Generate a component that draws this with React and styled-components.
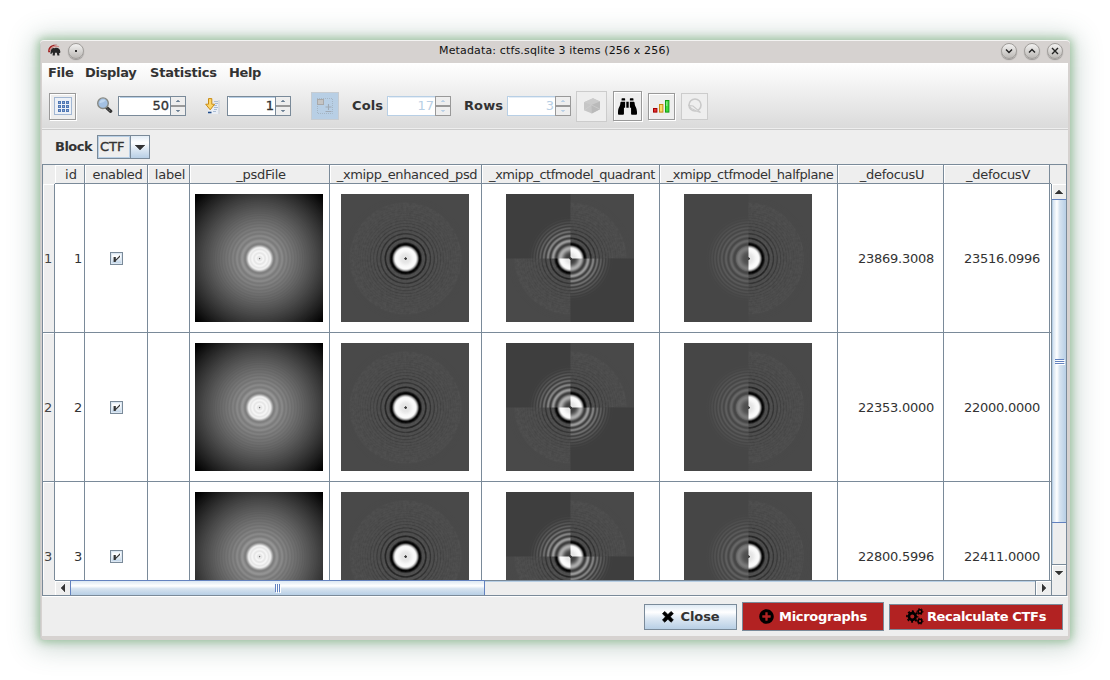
import React from "react";
import styled, { createGlobalStyle, css } from "styled-components";
import { FaBinoculars, FaPlusCircle } from "react-icons/fa";

const line = "#7a8a99";
const ink = "#333333";

const Global = createGlobalStyle`
  * { box-sizing: border-box; }
  body { margin: 0; background: #fff; overflow: hidden; }
  svg { display: block; flex: none; }
`;

const Desktop = styled.div`
  width: 1110px;
  height: 680px;
  padding: 40px;
  font: 13px/16px "DejaVu Sans", sans-serif;
  color: ${ink};
`;

const Window = styled.div`
  width: 1030px;
  height: 600px;
  padding: 0 2px 4px;
  display: flex;
  flex-direction: column;
  background: #d6d2d0;
  border-radius: 4px;
  box-shadow: inset 0 1px 0 #f4f3f2, inset 1px 0 0 #c9cbc8, 0 0 9px 2px rgba(60, 145, 60, 0.4),
    0 2px 26px 7px rgba(60, 105, 90, 0.26);
`;

const TitleBar = styled.div`
  height: 23px;
  flex: none;
  display: flex;
  align-items: center;
  padding: 0 5px 2px 6px;
`;

const Title = styled.div`
  flex: 1;
  text-align: center;
  font-size: 11px;
  letter-spacing: 0.15px;
  color: #111;
  padding: 1px 0 0 24px;
`;

const TitleButtons = styled.div`
  display: flex;
  align-items: center;
  gap: 7px;
`;

const RoundButton = styled.div`
  width: 16px;
  height: 16px;
  border-radius: 50%;
  background: linear-gradient(#f2f1f0, #bcb9b6);
  border: 1px solid #a19e9b;
  box-shadow: 0 1px 1px rgba(0, 0, 0, 0.3);
  display: flex;
  align-items: center;
  justify-content: center;
`;

const Chrome = styled.div`
  height: 67px;
  flex: none;
  background: linear-gradient(#ffffff, #dadada);
  border-bottom: 1px solid #cccccc;
  box-shadow: inset 0 -1px 0 #eeeeee;
`;

const MenuBar = styled.div`
  display: flex;
  height: 20px;
  align-items: center;
  padding-left: 6px;
`;

const MenuItem = styled.div`
  width: ${(p) => p.$w}px;
  font-weight: bold;
  letter-spacing: ${(p) => p.$track || 0}px;
`;

const Toolbar = styled.div`
  display: flex;
  height: 46px;
  align-items: center;
  padding-left: 7px;
`;

const Gap = styled.div`
  width: ${(p) => p.$w}px;
  flex: none;
`;

const ToolButton = styled.div`
  width: ${(p) => p.$w}px;
  height: ${(p) => p.$h}px;
  flex: none;
  display: flex;
  align-items: center;
  justify-content: center;
  border: 1px solid #999;
  background: #eeeeee;
  box-shadow: inset 1px 1px 0 #fff, 1px 1px 0 #fff;
  color: #000;
  ${(p) =>
    p.$disabled &&
    css`
      border-color: #cccccc;
      box-shadow: none;
    `}
  ${(p) =>
    p.$selected &&
    css`
      border-color: #c7ccd1;
      background: #b8cfe5;
      box-shadow: none;
    `}
`;

const ToolLabel = styled.div`
  width: ${(p) => p.$w}px;
  font-weight: bold;
  letter-spacing: 0.1px;
`;

const SpinnerBox = styled.div`
  width: ${(p) => p.$w}px;
  height: 20px;
  flex: none;
  display: flex;
  color: ${(p) => (p.$disabled ? "#b8cfe5" : ink)};
`;

const SpinnerField = styled.div`
  flex: 1;
  background: #fff;
  border: 1px solid ${(p) => (p.$disabled ? "#b8cfe5" : line)};
  border-right: 0;
  text-align: right;
  line-height: 18px;
  padding-right: 1px;
  box-shadow: inset 1px 0 0 #fff, inset 0 1px 0 ${(p) => (p.$disabled ? "#e4edf6" : "#b8cfe5")};
  -webkit-text-stroke: ${(p) => (p.$disabled ? 0 : 0.35)}px;
`;

const SpinnerArrows = styled.div`
  width: 16px;
  display: flex;
  flex-direction: column;
  border: 1px solid ${(p) => (p.$disabled ? "#999" : line)};
  background: #eee;
  color: ${(p) => (p.$disabled ? "#b8cfe5" : "#6b7f92")};
`;

const SpinnerArrow = styled.div`
  flex: 1;
  display: flex;
  align-items: center;
  justify-content: center;
  & + & {
    border-top: 2px solid ${(p) => (p.$disabled ? "#999" : line)};
  }
`;

const BlockRow = styled.div`
  height: 34px;
  flex: none;
  display: flex;
  align-items: center;
  padding-left: 13px;
  background: #eee;
  font-weight: bold;
`;

const BlockLabel = styled.div`
  width: 42px;
  letter-spacing: -0.5px;
  padding-bottom: 1px;
`;

const Combo = styled.div`
  width: 53px;
  height: 24px;
  display: flex;
  border: 1px solid ${line};
  font-weight: normal;
  -webkit-text-stroke: 0.35px;
`;

const ComboValue = styled.div`
  width: 32px;
  border: 1px solid #b8cfe5;
  line-height: 20px;
  padding-left: 1px;
`;

const ComboArrow = styled.div`
  flex: 1;
  border-left: 1px solid ${line};
  display: flex;
  align-items: center;
  justify-content: center;
  padding-top: 1px;
  background: linear-gradient(#e3edf6 0%, #fff 30%, #dde8f3 60%, #b8cfe5 100%);
`;

const TablePanel = styled.div`
  height: 432px;
  width: 1025px;
  flex: none;
  display: grid;
  grid-template-columns: 12px 996px 16px;
  grid-template-rows: 19px 396px 15px;
  border: 1px solid ${line};
  border-right: 0;
  background: #eee;
`;

const HeadRow = styled.div`
  display: flex;
  border-bottom: 1px solid ${line};
`;

const HeadCell = styled.div`
  width: ${(p) => p.$w}px;
  flex: none;
  border-right: 1px solid ${line};
  box-shadow: inset 1px 1px 0 #fff;
  text-align: center;
  line-height: 20px;
  height: 18px;
  letter-spacing: ${(p) => p.$track ?? -0.36}px;
  white-space: nowrap;
  padding-left: 3px;
`;

const CornerCell = styled.div`
  border-right: 1px solid ${(p) => (p.$edge ? line : "transparent")};
  border-left: 1px solid ${(p) => (p.$start ? line : "transparent")};
`;

const RowHeads = styled.div`
  overflow: hidden;
  border-right: 1px solid ${line};
`;

const RowHead = styled.div`
  height: 149px;
  padding: 1px 0 0 1px;
  display: flex;
  align-items: center;
  border-bottom: 1px solid ${line};
  box-shadow: inset 1px 1px 0 #fff;
  color: #444;
`;

const Body = styled.div`
  overflow: hidden;
  background: #fff;
`;

const Row = styled.div`
  display: flex;
  height: 149px;
  border-bottom: 1px solid ${line};
`;

const Cell = styled.div`
  width: ${(p) => p.$w}px;
  flex: none;
  border-right: 1px solid ${line};
  display: flex;
  align-items: center;
  justify-content: center;
  padding-right: 1px;
`;

const NumberCell = styled(Cell)`
  justify-content: flex-end;
  padding: 2px ${(p) => p.$pad}px 0 0;
  letter-spacing: -0.26px;
`;

const Check = styled.div`
  width: 13px;
  height: 13px;
  margin-left: 1px;
  border: 1px solid ${line};
  background: linear-gradient(#e3edf6, #fff 30%, #b8cfe5);
  box-shadow: inset 0 0 0 1px #dce7f2;
`;

const VScroll = styled.div`
  display: flex;
  flex-direction: column;
  border-left: 1px solid ${line};
  border-right: 1px solid ${line};
`;

const HScroll = styled.div`
  display: flex;
  border-top: 1px solid ${line};
`;

const ScrollButton = styled.div`
  width: ${(p) => p.$w}px;
  height: ${(p) => p.$h}px;
  flex: none;
  display: flex;
  align-items: center;
  justify-content: center;
  box-shadow: inset 1px 1px 0 #fff;
  border-${(p) => p.$side}: 1px solid ${line};
`;

const Track = styled.div`
  flex: 1;
  box-shadow: inset ${(p) => (p.$vertical ? "1px 0" : "0 1px")} 0 #b8cfe5;
`;

const VThumb = styled.div`
  height: 324px;
  flex: none;
  border: solid #6382bf;
  border-width: 1px 0;
  box-shadow: inset 1px 0 0 #b8cfe5;
  background: linear-gradient(90deg, #c8daec, #fff 35%, #d6e3f0 55%, #b8cfe5);
  display: flex;
  align-items: center;
  justify-content: center;
  padding: 2px 0 0 2px;
`;

const HThumb = styled.div`
  width: 415px;
  flex: none;
  margin-top: -1px;
  border: solid #6382bf;
  border-width: 1px 1px 0;
  background: linear-gradient(#dce8f3, #fff 35%, #d6e3f0 55%, #b8cfe5);
  display: flex;
  align-items: center;
  justify-content: center;
`;

const Footer = styled.div`
  flex: 1;
  background: #eee;
  border-top: 1px solid #fff;
  display: flex;
  align-items: center;
  justify-content: flex-end;
  gap: 5px;
  padding: 0 5px 0 0;
`;

const ActionButton = styled.div`
  width: ${(p) => p.$w}px;
  height: ${(p) => p.$h}px;
  display: flex;
  align-items: center;
  justify-content: center;
  gap: ${(p) => p.$gap}px;
  border: 1px solid ${line};
  font-weight: bold;
  letter-spacing: ${(p) => p.$track || 0}px;
  color: ${(p) => (p.$danger ? "#fff" : ink)};
  background: ${(p) => (p.$danger ? "#b22222" : "linear-gradient(#dfeaf4, #fff 30%, #dde8f3 55%, #b8cfe5)")};
  svg { color: #000; }
`;

/* ---- power spectrum thumbnails ---- */

const C = 64.6;
const R = 92;
const PERIOD = 206;
const grey = (v) => {
  const n = Math.max(0, Math.min(255, Math.round(v)));
  return `rgb(${n},${n},${n})`;
};
const smooth = (a, b, x) => {
  const t = Math.max(0, Math.min(1, (x - a) / (b - a)));
  return t * t * (3 - 2 * t);
};
const wave = (r) => Math.cos((2 * Math.PI * r * r) / PERIOD);

const profiles = {
  psd: (r) => {
    const base = 158 - 1.1 * r - 0.0078 * r * r;
    const fade = Math.exp(-Math.max(0, r - 14) / 14);
    const outer = base - 15 * fade * wave(r);
    const inner = 238 + 8 * Math.cos(r * 1.7);
    return inner + (outer - inner) * smooth(10, 14.6, r);
  },
  enhanced: (r) => {
    const amp = 74 * Math.exp(-Math.max(0, r - 14.3) / 10);
    const first = Math.exp(-Math.pow((r - 14.5) / 2.4, 2));
    const w = Math.max(wave(r), first * 1.6 - 0.6);
    const outer = 73 - amp * (w > 0 ? w : w * 0.1);
    const inner = r < 1.3 ? 60 : 228 + 22 * smooth(3, 9, r);
    return inner + (outer - inner) * smooth(10, 13.8, r);
  },
  modelStrong: (r) => {
    const amp = 55 * Math.exp(-Math.pow(Math.max(0, r - 10) / 19, 2));
    return 62 + amp * (1 - wave(r)) * (1 - smooth(34, 44, r));
  },
  modelSoft: (r) => {
    const amp = 24 * Math.exp(-Math.pow(r / 29, 2));
    return 70 + (amp * (1 - wave(r)) + (r < 13 ? 8 : 0)) * (1 - smooth(34, 44, r));
  },
};

const Ramp = ({ name }) => (
  <radialGradient id={name} gradientUnits="userSpaceOnUse" cx={C} cy={C} r={R}>
    {Array.from({ length: 185 }, (_, i) => (
      <stop key={i} offset={(i * 0.5) / R} stopColor={grey(profiles[name](i * 0.5))} />
    ))}
  </radialGradient>
);

const DefsHolder = styled.svg`
  position: absolute;
`;

const SharedDefs = () => (
  <DefsHolder width="0" height="0">
    <defs>
      {Object.keys(profiles).map((n) => (
        <Ramp key={n} name={n} />
      ))}
      <filter id="grain" x="0" y="0" width="1" height="1">
        <feTurbulence type="fractalNoise" baseFrequency="0.35" numOctaves="2" seed="4" />
        <feColorMatrix values="0 0 0 0 1  0 0 0 0 1  0 0 0 0 1  0.5 0 0 0 -0.1" />
        <feComposite in2="SourceGraphic" operator="in" />
      </filter>
    </defs>
  </DefsHolder>
);

const TOP_RIGHT = "M64 64V8.5A56 56 0 0 1 120.5 64Z";
const BOTTOM_LEFT = "M64 64H8.5A56 56 0 0 0 64 120.5Z";
const RIGHT_HALF = "M64 8.5A56 56 0 0 1 64 120.5Z";

const Spectrum = ({ kind }) => (
  <svg width="128" height="128" viewBox="0 0 128 128">
    {kind === "psd" && (
      <>
        <rect width="128" height="128" fill="url(#psd)" />
        <circle cx={C} cy={C} r="0.8" fill="#777" />
      </>
    )}
    {kind === "enhanced" && (
      <>
        <rect width="128" height="128" fill="url(#enhanced)" />
        <circle cx={C} cy={C} r="56" filter="url(#grain)" opacity="0.14" />
      </>
    )}
    {kind === "quadrant" && (
      <>
        <rect width="128" height="128" fill="url(#enhanced)" />
        <path d={TOP_RIGHT} filter="url(#grain)" opacity="0.14" />
        <path d={BOTTOM_LEFT} filter="url(#grain)" opacity="0.14" />
        <path d="M0 0H64.5V64.5H0ZM64.5 64.5H128V128H64.5Z" fill="url(#modelStrong)" />
      </>
    )}
    {kind === "halfplane" && (
      <>
        <rect width="128" height="128" fill="url(#enhanced)" />
        <path d={RIGHT_HALF} filter="url(#grain)" opacity="0.14" />
        <rect width="64.5" height="128" fill="url(#modelSoft)" />
      </>
    )}
  </svg>
);

/* ---- small icons ---- */

const Triangle = ({ dir, w = 8, h = 4 }) => {
  const d = {
    up: `M0 ${h}L${w / 2} 0L${w} ${h}Z`,
    down: `M0 0H${w}L${w / 2} ${h}Z`,
    left: `M${w} 0V${h}L0 ${h / 2}Z`,
    right: `M0 0V${h}L${w} ${h / 2}Z`,
  }[dir];
  return (
    <svg width={w} height={h}>
      <path d={d} fill="currentColor" stroke="currentColor" strokeWidth="0.5" />
    </svg>
  );
};

const AppIcon = () => (
  <svg width="13" height="13" viewBox="0 0 13 13">
    <path d="M0.2 8.2C-0.2 3 3.5 0 9.5 1C5.5 1.2 2.6 3.2 2 8.2Z" fill="#a01c1c" />
    <path d="M1.8 7C2.6 3.4 6 1.8 11 2.6" stroke="#cf8f8b" strokeWidth="1.2" fill="none" />
    <path d="M3 6.2C3.6 4.2 5.2 3.6 6.6 4.2C9 3.2 12.2 4.4 12.4 8L12 9H11.2L11.4 11.4H9.4L8.8 8.8H7L6.8 11.4H4.6L4.9 8.6L3.8 8.9L3.3 10.2L2.3 9.6Z" fill="#262626" />
  </svg>
);

const GridIcon = () => (
  <svg width="18" height="18" viewBox="0 0 18 18" shapeRendering="crispEdges">
    <rect x="0.5" y="0.5" width="17" height="17" fill="#edf1f7" stroke="#a2b7d3" />
    {[4, 8, 12].map((y) =>
      [4, 8, 12].map((x) => (
        <g key={`${x}-${y}`}>
          <rect x={x} y={y} width="3" height="3" fill="#5078b4" />
          <rect x={x + 1} y={y + 1} width="1" height="1" fill="#8fa9d0" />
        </g>
      ))
    )}
  </svg>
);

const Magnifier = () => (
  <svg width="17" height="18" viewBox="0 0 17 18">
    <path d="M10.5 10.5L14.6 14.2" stroke="#333" strokeWidth="3.4" strokeLinecap="round" />
    <path d="M11.5 12L14 14" stroke="#888" strokeWidth="1" strokeDasharray="1 1" />
    <circle cx="7" cy="6.2" r="5.3" fill="#a3c0e2" stroke="#888a85" strokeWidth="1.4" />
    <path d="M3.4 6A3.7 3.7 0 0 1 9.8 3.6Q6.8 6.5 3.4 6Z" fill="#bfd6ef" />
  </svg>
);

const GotoIcon = () => (
  <svg width="16" height="17" viewBox="0 0 16 17">
    <path d="M3 5H14.5V16H3Z" fill="#e9eef5" />
    <path d="M14 2V16" stroke="#c5cbd3" />
    <path d="M9 3.5H13M10 5.5H13M9 7.5H12M9 9.5H13M9 11.5H12M8 13.5H11" stroke="#a9bcd4" />
    <path d="M3 14.5H6.5" stroke="#204a87" strokeWidth="1.6" />
    <path d="M3.5 0.6H6.8V6.2H9.6L5.2 11.8L0.7 6.2H3.5Z" fill="#fcd669" stroke="#c88a12" />
  </svg>
);

const SelectIcon = () => (
  <svg width="18" height="18" viewBox="0 0 18 18">
    <path d="M1 1.5H16.5V16.5H1.5V1" fill="none" stroke="#a5b6c5" strokeDasharray="1 1" />
    <rect x="1.5" y="2.5" width="6" height="5" fill="#c4c4c4" stroke="#a9a9a9" />
    <path d="M9.5 10H15.5M12.5 7V13M9.5 14.5H15.5" stroke="#9faab5" strokeWidth="1.1" />
  </svg>
);

const CubeIcon = () => (
  <svg width="18" height="18" viewBox="0 0 18 18">
    <path d="M10 1.2L17 4.4V12.2L8.8 16.6L1 13.2V5.2Z" fill="#c6c6c6" />
    <path d="M10 1.2L17 4.4L8.4 8L1 5.2Z" fill="#cbcbcb" />
    <path d="M8.6 8L17 4.4V12.2L8.8 16.6Z" fill="#bababa" />
    <path d="M1 13.2L8.6 8L17 12.2" fill="none" stroke="#d0d0d0" strokeWidth="0.7" />
  </svg>
);

const ChartIcon = () => (
  <svg width="17" height="13" viewBox="0 0 17 13">
    <rect x="0.5" y="8.5" width="3.4" height="3.6" fill="#e03030" stroke="#a40000" />
    <rect x="6.5" y="4.5" width="3.4" height="7.6" fill="#fbd968" stroke="#c88a12" />
    <rect x="12.5" y="0.5" width="3.4" height="11.6" fill="#3cdc3c" stroke="#159a15" />
    <path d="M13.8 1.5V6" stroke="#9df09d" />
  </svg>
);

const ScopeIcon = () => (
  <svg width="16" height="16" viewBox="0 0 16 16" fill="none" stroke="#c9c9c9">
    <circle cx="8" cy="7" r="6" strokeWidth="1.6" />
    <path d="M2 7.5L6 8L13.5 14.4L10.6 13.6L4.2 10.4Z" fill="#eee" strokeWidth="1.1" />
  </svg>
);

const CrossIcon = () => (
  <svg width="12" height="12" viewBox="0 0 12 12">
    <path
      d="M0.4 2.6L2.8 0.4L5.9 3.5L9 0.4L11.4 2.6L8.4 5.8L11.4 9L9 11.3L5.9 8.2L2.8 11.3L0.4 9L3.4 5.8Z"
      fill="#000"
      stroke="#000"
      strokeWidth="0.6"
      strokeLinejoin="round"
    />
  </svg>
);

const Gear = ({ cx, cy, r, thick, teeth, tooth }) => {
  const edge = r + thick / 2 + tooth / 2 - 0.2;
  const step = (Math.PI * edge) / teeth;
  return (
    <g fill="none" stroke="#000">
      <circle cx={cx} cy={cy} r={r} strokeWidth={thick} />
      <circle
        cx={cx}
        cy={cy}
        r={edge}
        strokeWidth={tooth}
        strokeDasharray={`${step} ${step}`}
        strokeDashoffset={step / 2}
      />
    </g>
  );
};

const GearsIcon = () => (
  <svg width="18" height="17" viewBox="0 0 18 17">
    <Gear cx={6.3} cy={8.5} r={3.4} thick={2.7} teeth={8} tooth={1.6} />
    <Gear cx={14} cy={3.6} r={1.9} thick={1.6} teeth={6} tooth={1} />
    <Gear cx={14} cy={13.2} r={1.9} thick={1.6} teeth={6} tooth={1} />
  </svg>
);

const GripH = () => (
  <svg width="6" height="9" shapeRendering="crispEdges">
    <path d="M0.5 0V8M2.5 0V8M4.5 0V8" stroke="#6382bf" />
    <path d="M1.5 1V9M3.5 1V9M5.5 1V9" stroke="#fff" />
  </svg>
);

const GripV = () => (
  <svg width="10" height="6" shapeRendering="crispEdges">
    <path d="M0 0.5H9M0 2.5H9M0 4.5H9" stroke="#6382bf" />
    <path d="M1 1.5H10M1 3.5H10M1 5.5H10" stroke="#fff" />
  </svg>
);

const Glyph = ({ d }) => (
  <svg width="8" height="8" viewBox="0 0 8 8" fill="none" stroke="#222" strokeWidth="1.4">
    <path d={d} />
  </svg>
);

const Spinner = ({ w, value, disabled }) => (
  <SpinnerBox $w={w} $disabled={disabled}>
    <SpinnerField $disabled={disabled}>{value}</SpinnerField>
    <SpinnerArrows $disabled={disabled}>
      <SpinnerArrow $disabled={disabled}><Triangle dir="up" w={4} h={2} /></SpinnerArrow>
      <SpinnerArrow $disabled={disabled}><Triangle dir="down" w={4} h={2} /></SpinnerArrow>
    </SpinnerArrows>
  </SpinnerBox>
);

const columns = [
  { label: "id", w: 30, track: 0 },
  { label: "enabled", w: 63 },
  { label: "label", w: 42, track: -0.2 },
  { label: "_psdFile", w: 140, track: -0.25 },
  { label: "_xmipp_enhanced_psd", w: 152 },
  { label: "_xmipp_ctfmodel_quadrant", w: 178, track: -0.45 },
  { label: "_xmipp_ctfmodel_halfplane", w: 178, track: -0.45 },
  { label: "_defocusU", w: 106, track: -0.25 },
  { label: "_defocusV", w: 106, track: -0.25 },
];

const rows = [
  { id: 1, u: "23869.3008", v: "23516.0996" },
  { id: 2, u: "22353.0000", v: "22000.0000" },
  { id: 3, u: "22800.5996", v: "22411.0000" },
];

const DataRow = ({ row }) => (
  <Row>
    <NumberCell $w={30} $pad={2}>{row.id}</NumberCell>
    <Cell $w={63}>
      <Check>
        <svg width="11" height="11" viewBox="0 0 11 11">
          <path d="M2.6 4H4.8V6.5L9 2.2V4L4.8 8V9H2.6Z" fill="#333" />
        </svg>
      </Check>
    </Cell>
    <Cell $w={42} />
    <Cell $w={140}><Spectrum kind="psd" /></Cell>
    <Cell $w={152}><Spectrum kind="enhanced" /></Cell>
    <Cell $w={178}><Spectrum kind="quadrant" /></Cell>
    <Cell $w={178}><Spectrum kind="halfplane" /></Cell>
    <NumberCell $w={106} $pad={9}>{row.u}</NumberCell>
    <NumberCell $w={106} $pad={9}>{row.v}</NumberCell>
  </Row>
);

export default function App() {
  return (
    <Desktop>
      <Global />
      <SharedDefs />
      <Window>
        <TitleBar>
          <TitleButtons>
            <AppIcon />
            <RoundButton><svg width="2" height="2"><rect width="2" height="2" fill="#333" /></svg></RoundButton>
          </TitleButtons>
          <Title>Metadata: ctfs.sqlite 3 items (256 x 256)</Title>
          <TitleButtons>
            <RoundButton><Glyph d="M1 2.5L4 5.5L7 2.5" /></RoundButton>
            <RoundButton><Glyph d="M1 5.5L4 2.5L7 5.5" /></RoundButton>
            <RoundButton><Glyph d="M1 1L7 7M7 1L1 7" /></RoundButton>
          </TitleButtons>
        </TitleBar>

        <Chrome>
          <MenuBar>
            <MenuItem $w={37} $track={-0.3}>File</MenuItem>
            <MenuItem $w={65} $track={-0.3}>Display</MenuItem>
            <MenuItem $w={79} $track={-0.2}>Statistics</MenuItem>
            <MenuItem $w={50} $track={-0.4}>Help</MenuItem>
          </MenuBar>
          <Toolbar>
            <ToolButton $w={27} $h={27}><GridIcon /></ToolButton>
            <Gap $w={20} />
            <Magnifier />
            <Gap $w={5} />
            <Spinner w={68} value="50" />
            <Gap $w={19} />
            <GotoIcon />
            <Gap $w={6} />
            <Spinner w={64} value="1" />
            <Gap $w={20} />
            <ToolButton $w={28} $h={28} $selected><SelectIcon /></ToolButton>
            <Gap $w={13} />
            <ToolLabel $w={35}>Cols</ToolLabel>
            <Spinner w={64} value="17" disabled />
            <Gap $w={13} />
            <ToolLabel $w={43}>Rows</ToolLabel>
            <Spinner w={64} value="3" disabled />
            <Gap $w={5} />
            <ToolButton $w={31} $h={31} $disabled><CubeIcon /></ToolButton>
            <Gap $w={6} />
            <ToolButton $w={29} $h={30}><FaBinoculars size={19} /></ToolButton>
            <Gap $w={6} />
            <ToolButton $w={27} $h={27}><ChartIcon /></ToolButton>
            <Gap $w={6} />
            <ToolButton $w={27} $h={27} $disabled><ScopeIcon /></ToolButton>
          </Toolbar>
        </Chrome>

        <BlockRow>
          <BlockLabel>Block</BlockLabel>
          <Combo>
            <ComboValue>CTF</ComboValue>
            <ComboArrow><Triangle dir="down" w={10} h={5} /></ComboArrow>
          </Combo>
        </BlockRow>

        <TablePanel>
          <CornerCell />
          <HeadRow>
            {columns.map((c) => (
              <HeadCell key={c.label} $w={c.w} $track={c.track}>{c.label}</HeadCell>
            ))}
          </HeadRow>
          <CornerCell $edge />

          <RowHeads>
            {rows.map((r) => <RowHead key={r.id}>{r.id}</RowHead>)}
          </RowHeads>
          <Body>
            {rows.map((r) => <DataRow key={r.id} row={r} />)}
          </Body>
          <VScroll>
            <ScrollButton $h={15} $side="none"><Triangle dir="up" /></ScrollButton>
            <VThumb><GripV /></VThumb>
            <Track $vertical />
            <ScrollButton $h={16} $side="top"><Triangle dir="down" /></ScrollButton>
          </VScroll>

          <CornerCell />
          <HScroll>
            <ScrollButton $w={15} $side="none"><Triangle dir="left" w={4} h={8} /></ScrollButton>
            <HThumb><GripH /></HThumb>
            <Track />
            <ScrollButton $w={16} $side="left"><Triangle dir="right" w={4} h={8} /></ScrollButton>
          </HScroll>
          <CornerCell $start $edge />
        </TablePanel>

        <Footer>
          <ActionButton $w={93} $h={26} $gap={7} $track={-0.1}><CrossIcon />Close</ActionButton>
          <ActionButton $w={142} $h={29} $gap={5} $track={-0.3} $danger><FaPlusCircle size={15} />Micrographs</ActionButton>
          <ActionButton $w={174} $h={26} $gap={3} $track={-0.34} $danger><GearsIcon />Recalculate CTFs</ActionButton>
        </Footer>
      </Window>
    </Desktop>
  );
}
